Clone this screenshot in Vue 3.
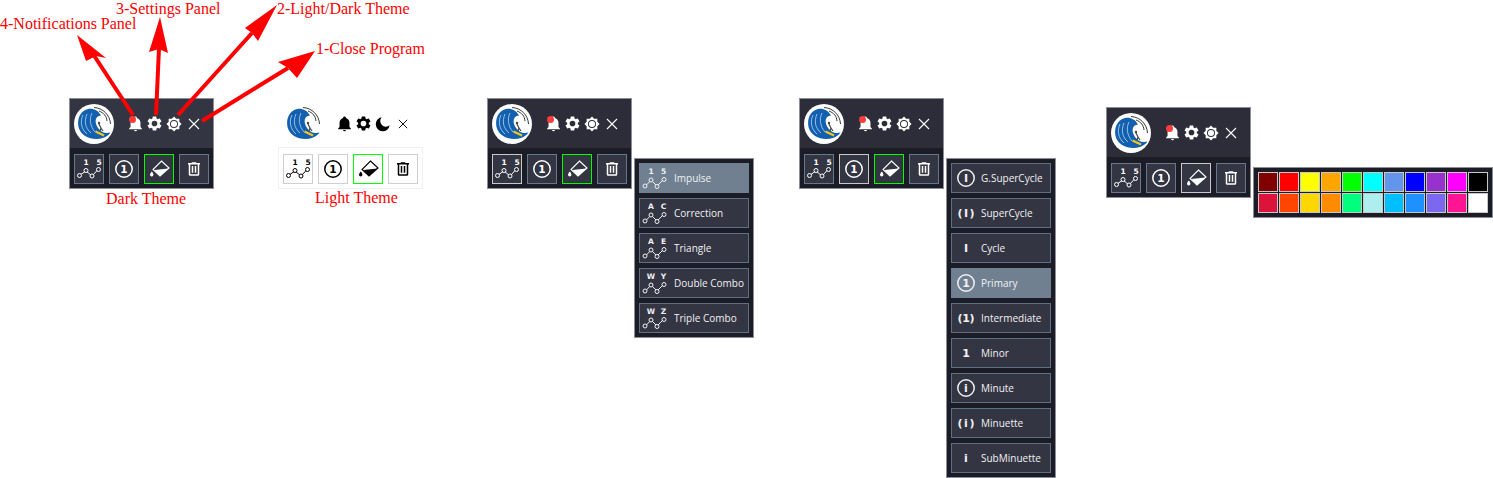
<script setup>
const paths = {
  bell: 'M21,19V20H3V19L5,17V11C5,7.9 7.03,5.17 10,4.29C10,4.19 10,4.1 10,4A2,2 0 0,1 12,2A2,2 0 0,1 14,4C14,4.1 14,4.19 14,4.29C16.97,5.17 19,7.9 19,11V17L21,19M14,21A2,2 0 0,1 12,23A2,2 0 0,1 10,21',
  gear: 'M12,16A4,4 0 0,1 8,12A4,4 0 0,1 12,8A4,4 0 0,1 16,12A4,4 0 0,1 12,16M19.43,12.97C19.47,12.65 19.5,12.33 19.5,12C19.5,11.67 19.47,11.34 19.43,11L21.54,9.37C21.73,9.22 21.78,8.95 21.66,8.73L19.66,5.27C19.54,5.05 19.27,4.96 19.05,5.05L16.56,6.05C16.04,5.66 15.5,5.32 14.87,5.07L14.5,2.42C14.46,2.18 14.25,2 14,2H10C9.75,2 9.54,2.18 9.5,2.42L9.13,5.07C8.5,5.32 7.96,5.66 7.44,6.05L4.95,5.05C4.73,4.96 4.46,5.05 4.34,5.27L2.34,8.73C2.21,8.95 2.27,9.22 2.46,9.37L4.57,11C4.53,11.34 4.5,11.67 4.5,12C4.5,12.33 4.53,12.65 4.57,12.97L2.46,14.63C2.27,14.78 2.21,15.05 2.34,15.27L4.34,18.73C4.46,18.95 4.73,19.03 4.95,18.95L7.44,17.94C7.96,18.34 8.5,18.68 9.13,18.93L9.5,21.58C9.54,21.82 9.75,22 10,22H14C14.25,22 14.46,21.82 14.5,21.58L14.87,18.93C15.5,18.67 16.04,18.34 16.56,17.94L19.05,18.95C19.27,19.03 19.54,18.95 19.66,18.73L21.66,15.27C21.78,15.05 21.73,14.78 21.54,14.63L19.43,12.97Z',
  sun: 'M12,7.4A4.6,4.6 0 0,0 7.4,12A4.6,4.6 0 0,0 12,16.6A4.6,4.6 0 0,0 16.6,12A4.6,4.6 0 0,0 12,7.4M12,18A6,6 0 0,1 6,12A6,6 0 0,1 12,6A6,6 0 0,1 18,12A6,6 0 0,1 12,18M20,8.69V4H15.31L12,0.69L8.69,4H4V8.69L0.69,12L4,15.31V20H8.69L12,23.31L15.31,20H20V15.31L23.31,12L20,8.69Z',
  moon: 'M10 2A10.5 10.5 0 1 0 22 14A8.5 8.5 0 0 1 10 2Z',
  trash: 'M9,3V4H4V6H5V19A2,2 0 0,0 7,21H17A2,2 0 0,0 19,19V6H20V4H15V3H9M7,6H17V19H7V6M9,8V17H11V8H9M13,8V17H15V8H13Z',
}

const widgets = [
  { id: 'a', x: 69, y: 98, theme: 'dark', green: true, dot: true, mode: 'sun' },
  { id: 'b', x: 278, y: 98, theme: 'light', green: true, dot: false, mode: 'moon' },
  { id: 'c', x: 487, y: 98, theme: 'dim', green: true, dot: true, mode: 'sun', on: 'wave' },
  { id: 'd', x: 799, y: 98, theme: 'dim', green: true, dot: true, mode: 'sun', on: 'num' },
  { id: 'e', x: 1106, y: 107, theme: 'dim', green: false, dot: true, mode: 'sun', on: 'fill' },
]

const labels = [
  { text: '4-Notifications Panel', x: 0, y: 15 },
  { text: '3-Settings Panel', x: 116, y: 0 },
  { text: '2-Light/Dark Theme', x: 277, y: 0 },
  { text: '1-Close Program', x: 316, y: 40 },
  { text: 'Dark Theme', x: 106, y: 190 },
  { text: 'Light Theme', x: 315, y: 189 },
]

const arrows = [
  { from: '133,115 93,54', head: '77,35 106,58 96,56 86,61' },
  { from: '156,115 159,48', head: '160,17 168,53 159,49 149,52' },
  { from: '178,115 252,33', head: '277,5 258,41 252,33 245,28' },
  { from: '202,121 288,68', head: '315,51 297,78 288,68 278,62' },
]

const waves = [
  { name: 'Impulse', a: '1', b: '5', active: true },
  { name: 'Correction', a: 'A', b: 'C' },
  { name: 'Triangle', a: 'A', b: 'E' },
  { name: 'Double Combo', a: 'W', b: 'Y' },
  { name: 'Triple Combo', a: 'W', b: 'Z' },
]

const degrees = [
  { name: 'G.SuperCycle', ch: 'I', form: 'circle' },
  { name: 'SuperCycle', ch: 'I', form: 'paren' },
  { name: 'Cycle', ch: 'I', form: 'plain' },
  { name: 'Primary', ch: '1', form: 'circle', active: true },
  { name: 'Intermediate', ch: '1', form: 'paren' },
  { name: 'Minor', ch: '1', form: 'plain' },
  { name: 'Minute', ch: 'i', form: 'circle' },
  { name: 'Minuette', ch: 'i', form: 'paren' },
  { name: 'SubMinuette', ch: 'i', form: 'plain' },
]

const colors = [
  '#800000', '#ff0000', '#ffff00', '#ffa500', '#00ff00', '#00ffff', '#6495ed', '#0000ff', '#9932cc', '#ff00ff', '#000000',
  '#dc143c', '#ff4500', '#ffd700', '#ff8c00', '#00ff7f', '#afeeee', '#00bfff', '#1e90ff', '#7b68ee', '#ff1493', '#ffffff',
]
</script>

<template>
  <div class="canvas">
    <section
      v-for="w in widgets"
      :key="w.id"
      class="panel"
      :class="w.theme"
      :style="{ left: w.x + 'px', top: w.y + 'px' }"
    >
      <header class="head">
        <svg class="logo" viewBox="0 0 40 40" width="40" height="40">
          <circle v-if="w.theme !== 'light'" cx="20" cy="20" r="20" fill="#fff" />
          <path d="M14 5C6 7 3 15 4.500 23C7 33 19 37 29 34C32 33 35 31 36.500 28.500C31 30 27 28 24 24C20 18 21 12 27 11.500C24 6 19 4 14 5Z" fill="#1360b0" />
          <path d="M9 11C6 17 7 25 13 30M13 10C10 17 11 24 17 29M18 9C15 15 16 22 21 28" fill="none" stroke="#a5cbe8" stroke-width="0.9" />
          <path d="M20 3.500C29 4 36 11 36.500 20M25 7C30 9 32.500 12 33 17" fill="none" stroke="#222" stroke-width="0.9" />
          <path d="M21.500 27.500L30 31.500" stroke="#f2c81e" stroke-width="2.2" />
          <path d="M25 20L27 24L26 27M27 24L29 27" fill="none" stroke="#444" stroke-width="1.2" />
          <circle cx="25" cy="19" r="1.200" fill="#444" />
        </svg>
        <div class="tools">
          <span class="tool">
            <svg viewBox="0 0 24 24" width="17" height="17"><path :d="paths.bell" fill="currentColor" /></svg>
            <i v-if="w.dot" class="dot"></i>
          </span>
          <span class="tool"><svg viewBox="0 0 24 24" width="17" height="17"><path :d="paths.gear" fill="currentColor" /></svg></span>
          <span class="tool"><svg viewBox="0 0 24 24" width="16" height="16"><path :d="w.mode === 'sun' ? paths.sun : paths.moon" fill="currentColor" /></svg></span>
          <span class="tool"><svg class="close" viewBox="0 0 12 12"><path d="M1 1L11 11M11 1L1 11" stroke="currentColor" stroke-width="1.1" fill="none" /></svg></span>
        </div>
      </header>
      <div class="row">
        <button class="btn" :class="{ selected: w.on === 'wave' }">
          <svg viewBox="1 1 28 28" width="28" height="28">
            <path d="M6 21L12 17L18 22L24.500 15" fill="none" stroke="currentColor" stroke-width="1" />
            <circle cx="5.500" cy="21.500" r="2" fill="var(--fill)" stroke="currentColor" />
            <circle cx="12" cy="16.500" r="2" fill="var(--fill)" stroke="currentColor" />
            <circle cx="18" cy="22" r="2" fill="var(--fill)" stroke="currentColor" />
            <circle cx="24.500" cy="15.500" r="2" fill="var(--fill)" stroke="currentColor" />
            <text x="12" y="11" class="glyph" text-anchor="middle" font-size="7.500">1</text>
            <text x="25" y="11" class="glyph" text-anchor="middle" font-size="7.500">5</text>
          </svg>
        </button>
        <button class="btn" :class="{ selected: w.on === 'num' }">
          <svg viewBox="1 1 28 28" width="28" height="28">
            <circle cx="15" cy="15" r="8.200" fill="none" stroke="currentColor" stroke-width="1.500" />
            <text x="15" y="18.700" class="glyph" text-anchor="middle" font-size="10.500">1</text>
          </svg>
        </button>
        <button class="btn" :class="{ green: w.green, selected: w.on === 'fill' }">
          <svg viewBox="1 1 28 28" width="28" height="28">
            <path d="M17.500 7L25 14L16 22L9 15.500Z" fill="none" stroke="currentColor" stroke-width="1.100" />
            <path d="M10.500 16L24.500 14.500L16 22Z" fill="currentColor" />
            <path d="M7.800 17.500C6.500 19.200 6 20 6 20.800A1.700 1.700 0 0 0 9.400 20.800C9.400 20 9 19.200 7.800 17.500Z" fill="currentColor" />
          </svg>
        </button>
        <button class="btn">
          <svg viewBox="0 0 24 24" width="18" height="18"><path :d="paths.trash" fill="currentColor" /></svg>
        </button>
      </div>
    </section>

    <nav class="menu wave-menu">
      <div v-for="item in waves" :key="item.name" class="item" :class="{ active: item.active }">
        <svg class="item-icon" viewBox="0 0 30 30" width="30" height="30">
          <path d="M6.500 23L12 17L18 23L25 16" fill="none" stroke="currentColor" stroke-width="1" />
          <circle cx="6" cy="23" r="2" fill="var(--fill)" stroke="currentColor" />
          <circle cx="12" cy="17" r="2" fill="var(--fill)" stroke="currentColor" />
          <circle cx="18" cy="23.500" r="2" fill="var(--fill)" stroke="currentColor" />
          <circle cx="25" cy="16.500" r="2" fill="var(--fill)" stroke="currentColor" />
          <text x="12" y="11" class="glyph" text-anchor="middle" font-size="7.500">{{ item.a }}</text>
          <text x="24.500" y="11" class="glyph" text-anchor="middle" font-size="7.500">{{ item.b }}</text>
        </svg>
        <span class="item-label spaced">{{ item.name }}</span>
      </div>
    </nav>

    <nav class="menu degree-menu">
      <div v-for="item in degrees" :key="item.name" class="item" :class="{ active: item.active }">
        <svg class="item-icon" viewBox="0 0 30 30" width="30" height="30">
          <circle v-if="item.form === 'circle'" cx="15" cy="15" r="8.200" fill="none" stroke="currentColor" stroke-width="1.500" />
          <text v-if="item.form === 'paren'" x="6.500" y="19" class="glyph" font-size="11" textLength="17">({{ item.ch }})</text>
          <text v-else x="15" y="19" class="glyph" text-anchor="middle" font-size="11">{{ item.ch }}</text>
        </svg>
        <span class="item-label">{{ item.name }}</span>
      </div>
    </nav>

    <div class="palette">
      <span v-for="c in colors" :key="c" class="swatch" :style="{ background: c }"></span>
    </div>

    <span
      v-for="l in labels"
      :key="l.text"
      class="note"
      :style="{ left: l.x + 'px', top: l.y + 'px' }"
    >{{ l.text }}</span>

    <svg class="arrows" width="1493" height="478" viewBox="0 0 1493 478">
      <g v-for="a in arrows" :key="a.head">
        <polyline :points="a.from" fill="none" stroke="#ff0000" stroke-width="4" />
        <polygon :points="a.head" fill="#ff0000" />
      </g>
    </svg>
  </div>
</template>

<style scoped>
.canvas {
  position: relative;
  width: 1493px;
  height: 478px;
  overflow: hidden;
  background: #fff;
  font-family: "Open Sans", "Noto Sans", sans-serif;
}

.panel {
  position: absolute;
  box-sizing: border-box;
  width: 145px;
  height: 91px;
  border: 1px solid #8b8e98;
  display: flex;
  flex-direction: column;
}
.panel.dark { --head: #343542; --low: #1b1c26; --fill: #343542; --line: #66788c; color: #fff; }
.panel.dim { --head: #2c2d39; --low: #1b1c26; --fill: #343542; --line: #66788c; color: #fff; }
.panel.light { --head: #fff; --low: #fff; --fill: #fff; --line: #cfcfcf; color: #000; border-color: transparent; }
.panel.light .row { box-shadow: 0 0 0 1px #f1f1f1; }

.head {
  height: 49px;
  background: var(--head);
  display: flex;
  align-items: center;
  padding-left: 4px;
}
.logo { display: block; flex: none; }
.tools { display: flex; margin-left: 11.5px; }
.tool {
  position: relative;
  width: 19.5px;
  height: 20px;
  display: flex;
  align-items: center;
  justify-content: center;
}
.close { width: 12px; height: 12px; }
.light .close { width: 10px; height: 10px; }
.dot {
  position: absolute;
  left: 3px;
  top: 2px;
  width: 7px;
  height: 7px;
  border-radius: 50%;
  background: #ff3b3b;
}

.row {
  flex: 1;
  background: var(--low);
  display: flex;
  gap: 5px;
  padding: 6px 4px 4px;
}
.btn {
  box-sizing: border-box;
  width: 30px;
  height: 30px;
  padding: 0;
  background: var(--fill);
  border: 1px solid var(--line);
  color: inherit;
  display: flex;
  align-items: center;
  justify-content: center;
}
.btn.green { border-color: #00ff00; }
.btn.selected { border-color: #c8c8c8; }
.glyph {
  font-family: "DejaVu Sans", sans-serif;
  font-weight: 700;
  fill: currentColor;
}

.menu {
  position: absolute;
  top: 158px;
  box-sizing: border-box;
  border: 1px solid #8b8e98;
  background: #1b1c26;
  padding: 4px;
  display: flex;
  flex-direction: column;
  gap: 5px;
  --fill: #343542;
  color: #f1f1f4;
}
.wave-menu { left: 634px; width: 120px; }
.degree-menu { left: 946px; width: 110px; }

.item {
  box-sizing: border-box;
  height: 30px;
  display: flex;
  align-items: center;
  background: #343542;
  border: 1px solid #5e7084;
}
.item.active {
  --fill: #708090;
  background: #708090;
  border-color: #708090;
}
.item-icon { flex: none; margin-left: -1px; }
.item-label { font-size: 10px; white-space: nowrap; }
.item-label.spaced { margin-left: 5px; }

.palette {
  position: absolute;
  left: 1253px;
  top: 167px;
  box-sizing: border-box;
  width: 240px;
  height: 51px;
  padding: 4px;
  border: 1px solid #8b8e98;
  background: #1b1c26;
  display: grid;
  grid-template-columns: repeat(11, 20px);
  grid-auto-rows: 20px;
  gap: 1px;
}
.swatch {
  box-sizing: border-box;
  border: 1px solid #c8c8c8;
}

.note {
  position: absolute;
  height: 18px;
  line-height: 18px;
  font-family: "Liberation Serif", serif;
  font-size: 16px;
  color: #ff0000;
  white-space: nowrap;
}
.arrows {
  position: absolute;
  left: 0;
  top: 0;
  pointer-events: none;
}
</style>
